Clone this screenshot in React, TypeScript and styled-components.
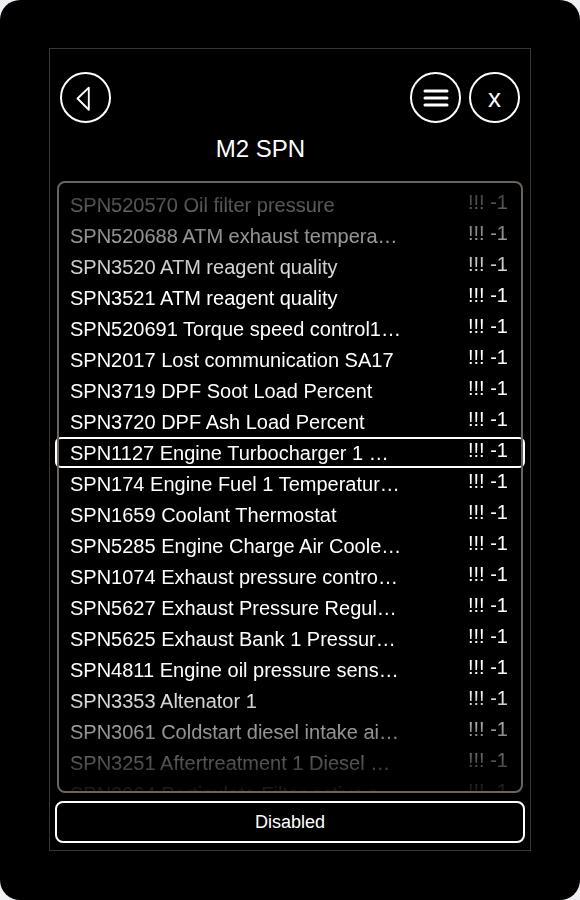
import React from "react";
import styled, { createGlobalStyle } from "styled-components";

const GlobalStyle = createGlobalStyle`
  html, body {
    margin: 0;
    padding: 0;
    background: #eef0f3;
  }
  * {
    box-sizing: border-box;
  }
`;

const Screen = styled.div`
  display: flex;
  justify-content: center;

  width: 580px;
  height: 900px;
  padding-top: 48px;

  background: #000;
  border-radius: 20px;
  font-family: "Liberation Sans", Arial, sans-serif;
  color: #fff;
`;

const Panel = styled.div`
  display: flex;
  flex-direction: column;

  width: 482px;
  height: 803px;
  padding: 23px 5px 7px;

  border: 1px solid #363636;
`;

const Header = styled.div`
  display: grid;
  grid-template-columns: 51px 1fr auto;
  row-gap: 12px;

  padding: 0 5px;
`;

const Actions = styled.div`
  display: flex;
  gap: 8px;
`;

const RoundButton = styled.button`
  display: flex;
  align-items: center;
  justify-content: center;

  width: 51px;
  height: 51px;
  padding: 0;

  background: #000;
  border: 2px solid #fff;
  border-radius: 50%;
  color: #fff;
  font-family: "Liberation Sans", Arial, sans-serif;
  font-size: 26px;
  line-height: 1;
  cursor: pointer;
`;

const Title = styled.h1`
  grid-column: 2;
  margin: 0;

  font-size: 24px;
  font-weight: 400;
  line-height: 28px;
  text-align: center;
`;

const ListFrame = styled.div`
  position: relative;
  margin-top: 18px;
  height: 612px;

  &::after {
    content: "";
    position: absolute;
    top: 0;
    bottom: 0;
    left: 2px;
    right: 2px;

    border: 2px solid #6c645a;
    border-radius: 8px;
    pointer-events: none;
  }
`;

const Rows = styled.div`
  height: 100%;
  padding-top: 8px;
  overflow: hidden;

  mask-image: linear-gradient(
    to bottom,
    rgba(0, 0, 0, 0.15) 0,
    #000 110px,
    #000 calc(100% - 110px),
    rgba(0, 0, 0, 0.06) 100%
  );
`;

const Row = styled.div<{ $selected?: boolean }>`
  display: flex;
  align-items: center;
  justify-content: space-between;

  height: 31px;
  padding: 0 15px 0 13px;

  border: 2px solid ${(p) => (p.$selected ? "#fff" : "transparent")};
  border-radius: 6px;
  font-size: 20px;
`;

const Name = styled.span`
  width: 332px;
  padding-top: 1px;
  overflow: hidden;
  white-space: nowrap;
  text-overflow: ellipsis;
`;

const Value = styled.span`
  margin-bottom: 5px;
  white-space: nowrap;
`;

const ToggleButton = styled.button`
  height: 42px;
  margin-top: 8px;

  background: #000;
  border: 2px solid #fff;
  border-radius: 8px;
  color: #fff;
  font-family: "Liberation Sans", Arial, sans-serif;
  font-size: 18px;
  cursor: pointer;
`;

const BackIcon = () => (
  <svg width="50" height="50" viewBox="0 0 50 50" fill="none">
    <path d="M16.5 25.5 L28.5 14 L28.5 37.5 Z" stroke="#fff" strokeWidth="2" strokeLinejoin="round" />
  </svg>
);

const MenuIcon = () => (
  <svg width="26" height="22" viewBox="0 0 26 22" fill="none">
    <path d="M2 4h22M2 11h22M2 18h22" stroke="#fff" strokeWidth="3" strokeLinecap="round" />
  </svg>
);

const spns = [
  "SPN520570 Oil filter pressure",
  "SPN520688 ATM exhaust temperature",
  "SPN3520 ATM reagent quality",
  "SPN3521 ATM reagent quality",
  "SPN520691 Torque speed control1 message",
  "SPN2017 Lost communication SA17",
  "SPN3719 DPF Soot Load Percent",
  "SPN3720 DPF Ash Load Percent",
  "SPN1127 Engine Turbocharger 1 Boost Pressure",
  "SPN174 Engine Fuel 1 Temperature 1",
  "SPN1659 Coolant Thermostat",
  "SPN5285 Engine Charge Air Cooler Outlet",
  "SPN1074 Exhaust pressure control valve",
  "SPN5627 Exhaust Pressure Regulator",
  "SPN5625 Exhaust Bank 1 Pressure Sensor",
  "SPN4811 Engine oil pressure sensor 2",
  "SPN3353 Altenator 1",
  "SPN3061 Coldstart diesel intake air heater",
  "SPN3251 Aftertreatment 1 Diesel Particulate Filter",
  "SPN3064 Particulate Filter active regeneration",
];

const App = () => {
  const [selected, setSelected] = React.useState(8);

  return (
    <>
      <GlobalStyle />
      <Screen>
        <Panel>
          <Header>
            <RoundButton aria-label="back">
              <BackIcon />
            </RoundButton>
            <span />
            <Actions>
              <RoundButton aria-label="menu">
                <MenuIcon />
              </RoundButton>
              <RoundButton aria-label="close">x</RoundButton>
            </Actions>
            <Title>M2 SPN</Title>
          </Header>

          <ListFrame>
            <Rows>
              {spns.map((name, i) => (
                <Row key={name} $selected={i === selected} onClick={() => setSelected(i)}>
                  <Name>{name}</Name>
                  <Value>!!! -1</Value>
                </Row>
              ))}
            </Rows>
          </ListFrame>

          <ToggleButton>Disabled</ToggleButton>
        </Panel>
      </Screen>
    </>
  );
};

export default App;
